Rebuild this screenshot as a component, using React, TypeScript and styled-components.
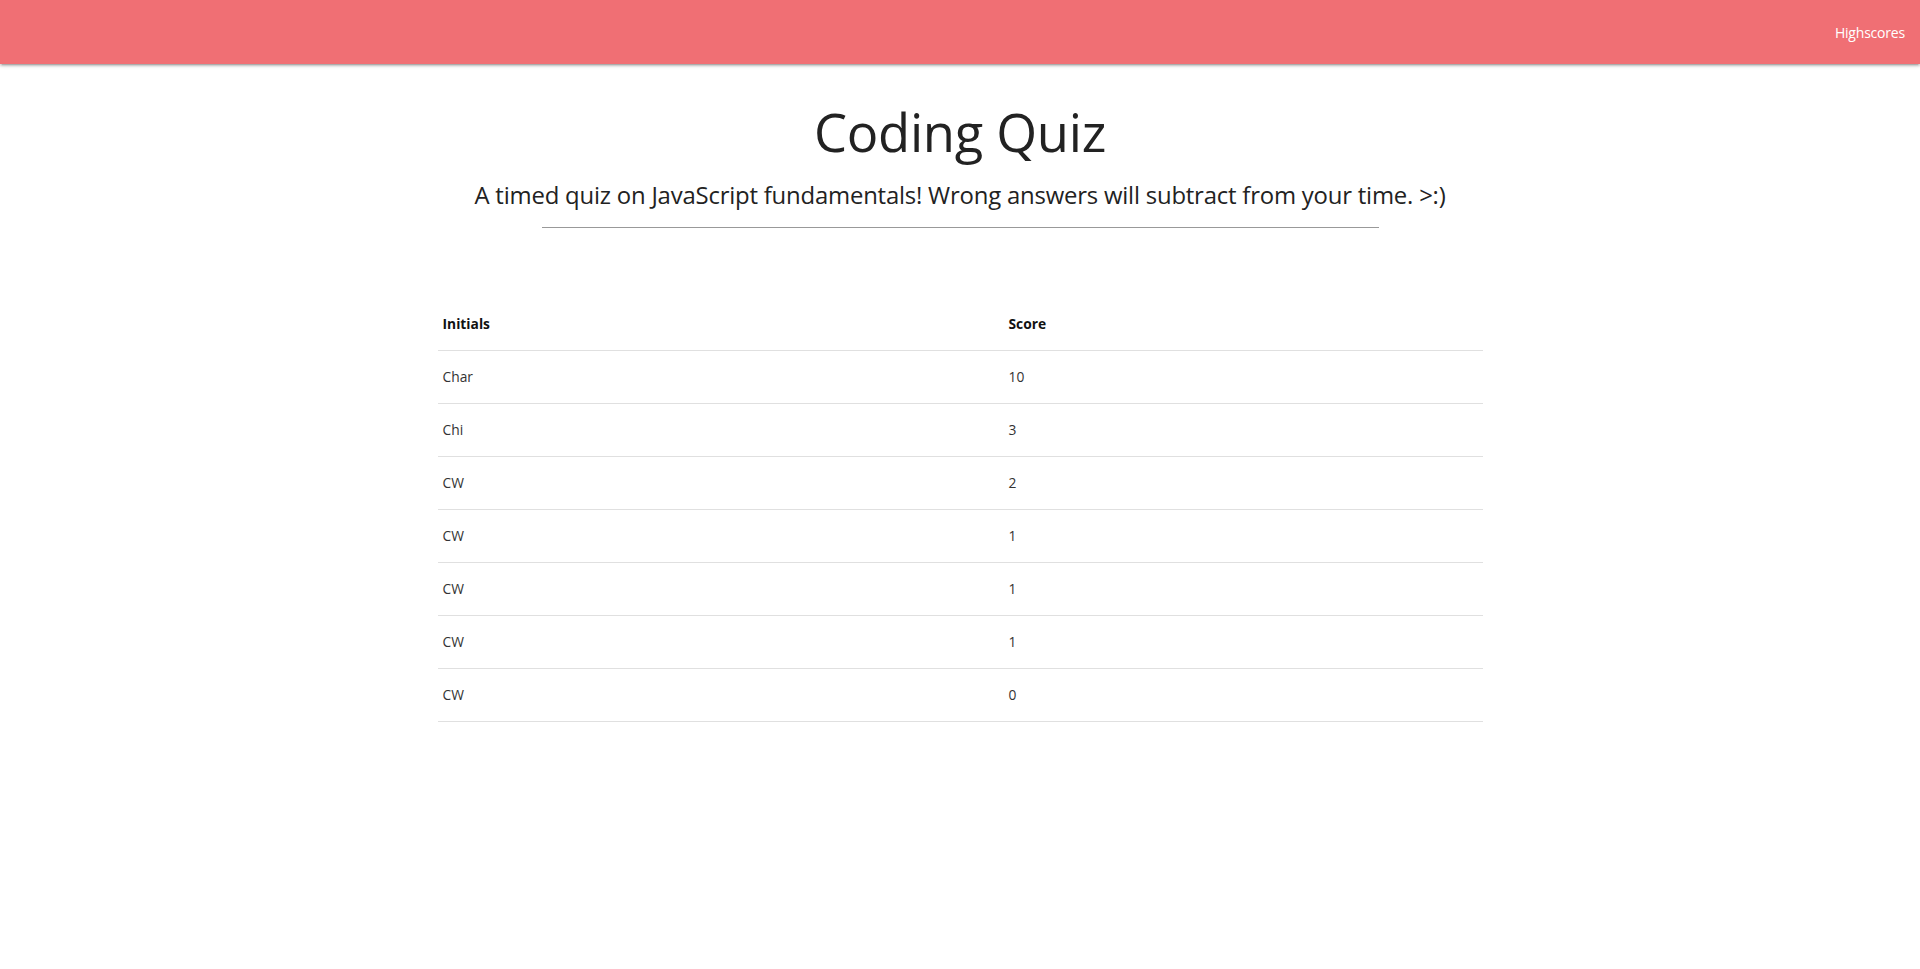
import React from "react";
import styled, { createGlobalStyle } from "styled-components";

const Global = createGlobalStyle`
  html, body { margin: 0; padding: 0; background: #fff; }
  body {
    font-family: "Open Sans", "Noto Sans", "Liberation Sans", sans-serif;
    color: rgba(0,0,0,0.87);
    font-size: 15px;
  }
`;

const Nav = styled.nav`
  height: 64px;
  background: #f06f74;
  box-shadow: 0 2px 2px 0 rgba(0,0,0,.14), 0 3px 1px -2px rgba(0,0,0,.12), 0 1px 5px 0 rgba(0,0,0,.2);
  display: flex;
  justify-content: flex-end;
  align-items: center;
`;

const NavLink = styled.a`
  color: #fff;
  text-decoration: none;
  font-size: 14px;
  line-height: 64px;
  padding: 1px 15px 0;
  letter-spacing: -0.2px;
`;

const Main = styled.main`
  max-width: 1045px;
  margin: 0 auto;
`;

const Header = styled.header`
  display: flex;
  flex-direction: column;
  align-items: center;
  text-align: center;
`;

const Title = styled.h1`
  font-weight: 400;
  font-size: 52.5px;
  line-height: 64px;
  margin: 36px 0 0;
  color: #222;
  letter-spacing: -0.3px;
`;

const Subtitle = styled.h2`
  font-weight: 400;
  font-size: 23.9px;
  line-height: 34px;
  margin: 14px 0 0;
  color: #222;
  letter-spacing: -0.2px;
`;

const Rule = styled.hr`
  width: 837px;
  border: none;
  border-top: 1px solid #999;
  margin: 15px auto 0;
`;

const Table = styled.table`
  width: 100%;
  border-collapse: collapse;
  margin-top: 70px;
  font-size: 13.8px;
`;

const Row = styled.tr`
  border-bottom: 1px solid #e0e0e0;
`;

const HeadCell = styled.th<{ $w?: string }>`
  text-align: left;
  font-weight: 700;
  padding: 15px 5px;
  line-height: 22px;
  height: 22px;
  width: ${(p) => p.$w ?? "auto"};
  color: #111;
`;

const Cell = styled.td`
  padding: 15px 5px;
  line-height: 22px;
  height: 22px;
  color: #333;
`;

const scores: [string, number][] = [
  ["Char", 10],
  ["Chi", 3],
  ["CW", 2],
  ["CW", 1],
  ["CW", 1],
  ["CW", 1],
  ["CW", 0],
];

export default function App() {
  return (
    <>
      <Global />
      <Nav>
        <NavLink href="#">Highscores</NavLink>
      </Nav>
      <Main>
        <Header>
          <Title>Coding Quiz</Title>
          <Subtitle>A timed quiz on JavaScript fundamentals! Wrong answers will subtract from your time. &gt;:)</Subtitle>
          <Rule />
        </Header>
        <Table>
          <thead>
            <Row>
              <HeadCell $w="556px">Initials</HeadCell>
              <HeadCell>Score</HeadCell>
            </Row>
          </thead>
          <tbody>
            {scores.map(([name, score], i) => (
              <Row key={i}>
                <Cell>{name}</Cell>
                <Cell>{score}</Cell>
              </Row>
            ))}
          </tbody>
        </Table>
      </Main>
    </>
  );
}
